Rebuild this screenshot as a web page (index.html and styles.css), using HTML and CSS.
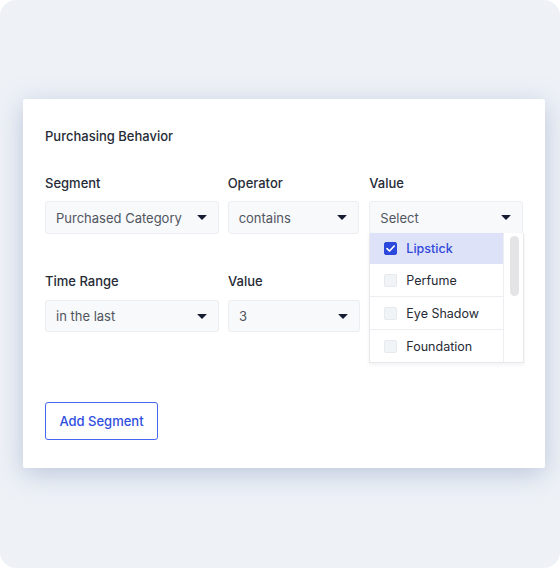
FILE: index.html
```html
<!DOCTYPE html>
<html>
<head>
<meta charset="utf-8">
<link rel="stylesheet" href="styles.css">
</head>
<body>
<div class="page">
  <div class="card">
    <div class="title">Purchasing Behavior</div>
    <div class="row row1">
      <div class="field f-seg">
        <div class="label">Segment</div>
        <div class="select"><span>Purchased Category</span><i class="caret"></i></div>
      </div>
      <div class="field f-op">
        <div class="label">Operator</div>
        <div class="select"><span>contains</span><i class="caret"></i></div>
      </div>
      <div class="field f-val">
        <div class="label">Value</div>
        <div class="select"><span>Select</span><i class="caret"></i></div>
        <div class="dropdown">
          <ul class="options">
            <li class="opt selected"><span class="cb"><svg viewBox="0 0 13 13" width="13" height="13"><path d="M3 6.6 L5.5 9 L10.2 4" fill="none" stroke="#fff" stroke-width="1.7" stroke-linecap="round" stroke-linejoin="round"/></svg></span>Lipstick</li>
            <li class="opt"><span class="cb"></span>Perfume</li>
            <li class="opt"><span class="cb"></span>Eye Shadow</li>
            <li class="opt"><span class="cb"></span>Foundation</li>
          </ul>
          <div class="track"><div class="thumb"></div></div>
        </div>
      </div>
    </div>
    <div class="row row2">
      <div class="field f-seg">
        <div class="label">Time Range</div>
        <div class="select"><span>in the last</span><i class="caret"></i></div>
      </div>
      <div class="field f-op">
        <div class="label">Value</div>
        <div class="select"><span>3</span><i class="caret"></i></div>
      </div>
    </div>
    <button class="add">Add Segment</button>
  </div>
</div>
</body>
</html>
```

FILE: styles.css
```css
* { box-sizing: border-box; }
html, body { margin: 0; padding: 0; background: #ffffff; }
body { font-family: Inter, "Noto Sans", "Liberation Sans", sans-serif; }
.page {
  width: 560px;
  height: 568px;
  background: #eef2f7;
  border-radius: 16px;
  padding: 99px 15px 0 23px;
}
.card {
  width: 522px;
  height: 369px;
  background: #ffffff;
  border-radius: 2px;
  box-shadow: 0 6px 26px rgba(140, 156, 192, 0.5);
  padding: 29px 22px 0 22px;
}
.title {
  font-size: 13px;
  line-height: 16px;
  font-weight: 500;
  color: #262b36;
}
.row {
  display: flex;
  gap: 0;
}
.row1 { margin-top: 31px; }
.row2 { margin-top: 39px; }
.field { position: relative; }
.f-seg { width: 174px; margin-right: 9px; }
.f-op { width: 132px; margin-right: 10px; }
.f-val { width: 154px; }
.label {
  font-size: 13px;
  line-height: 16px;
  font-weight: 500;
  color: #262b36;
  margin-bottom: 10px;
}
.row2 .label { margin-bottom: 11px; }
.select {
  height: 33px;
  background: #f8f9fa;
  border: 1px solid #eceef1;
  border-radius: 3px;
  display: flex;
  align-items: center;
  justify-content: space-between;
  padding: 0 11px 0 10px;
  font-size: 13px;
  color: #50555f;
}
.row2 .select { height: 32px; }
.caret {
  width: 0;
  height: 0;
  border-left: 5px solid transparent;
  border-right: 5px solid transparent;
  border-top: 5px solid #161d33;
  border-radius: 1px;
}
.dropdown {
  position: absolute;
  left: 0;
  top: 58px;
  width: 155px;
  height: 130px;
  background: #ffffff;
  border: 1px solid #e6e8ec;
  border-top: none;
  box-shadow: 0 2px 4px rgba(30, 40, 70, 0.06);
  display: flex;
  z-index: 2;
}
.options {
  list-style: none;
  margin: 0;
  padding: 0;
  width: 133px;
}
.opt {
  height: 33px;
  display: flex;
  align-items: center;
  padding-left: 14px;
  font-size: 12.5px;
  color: #262b36;
  border-bottom: 1px solid #eceef1;
}
.opt:last-child { border-bottom: none; height: 32px; }
.opt.selected {
  background: #dde2f9;
  color: #3149d9;
  font-weight: 500;
  border-bottom: none;
  height: 31px;
}
.cb {
  width: 13px;
  height: 13px;
  border-radius: 2px;
  background: #f1f4f7;
  border: 1px solid #e6eaef;
  margin-right: 9px;
  display: flex;
  align-items: center;
  justify-content: center;
}
.selected .cb {
  background: #2c47db;
  border-color: #2c47db;
}
.selected .cb svg { display: block; margin: -1px; }
.track {
  flex: 1;
  border-left: 1px solid #eceef1;
  padding: 3px 0 0 6px;
}
.thumb {
  width: 9px;
  height: 60px;
  background: #e4e4e6;
  border-radius: 5px;
}
.add {
  margin-top: 70px;
  height: 38px;
  width: 113px;
  background: #ffffff;
  border: 1px solid #4666ef;
  border-radius: 3px;
  font-family: inherit;
  font-size: 13px;
  font-weight: 500;
  color: #2f4fe0;
  padding: 0;
  cursor: pointer;
}
```
